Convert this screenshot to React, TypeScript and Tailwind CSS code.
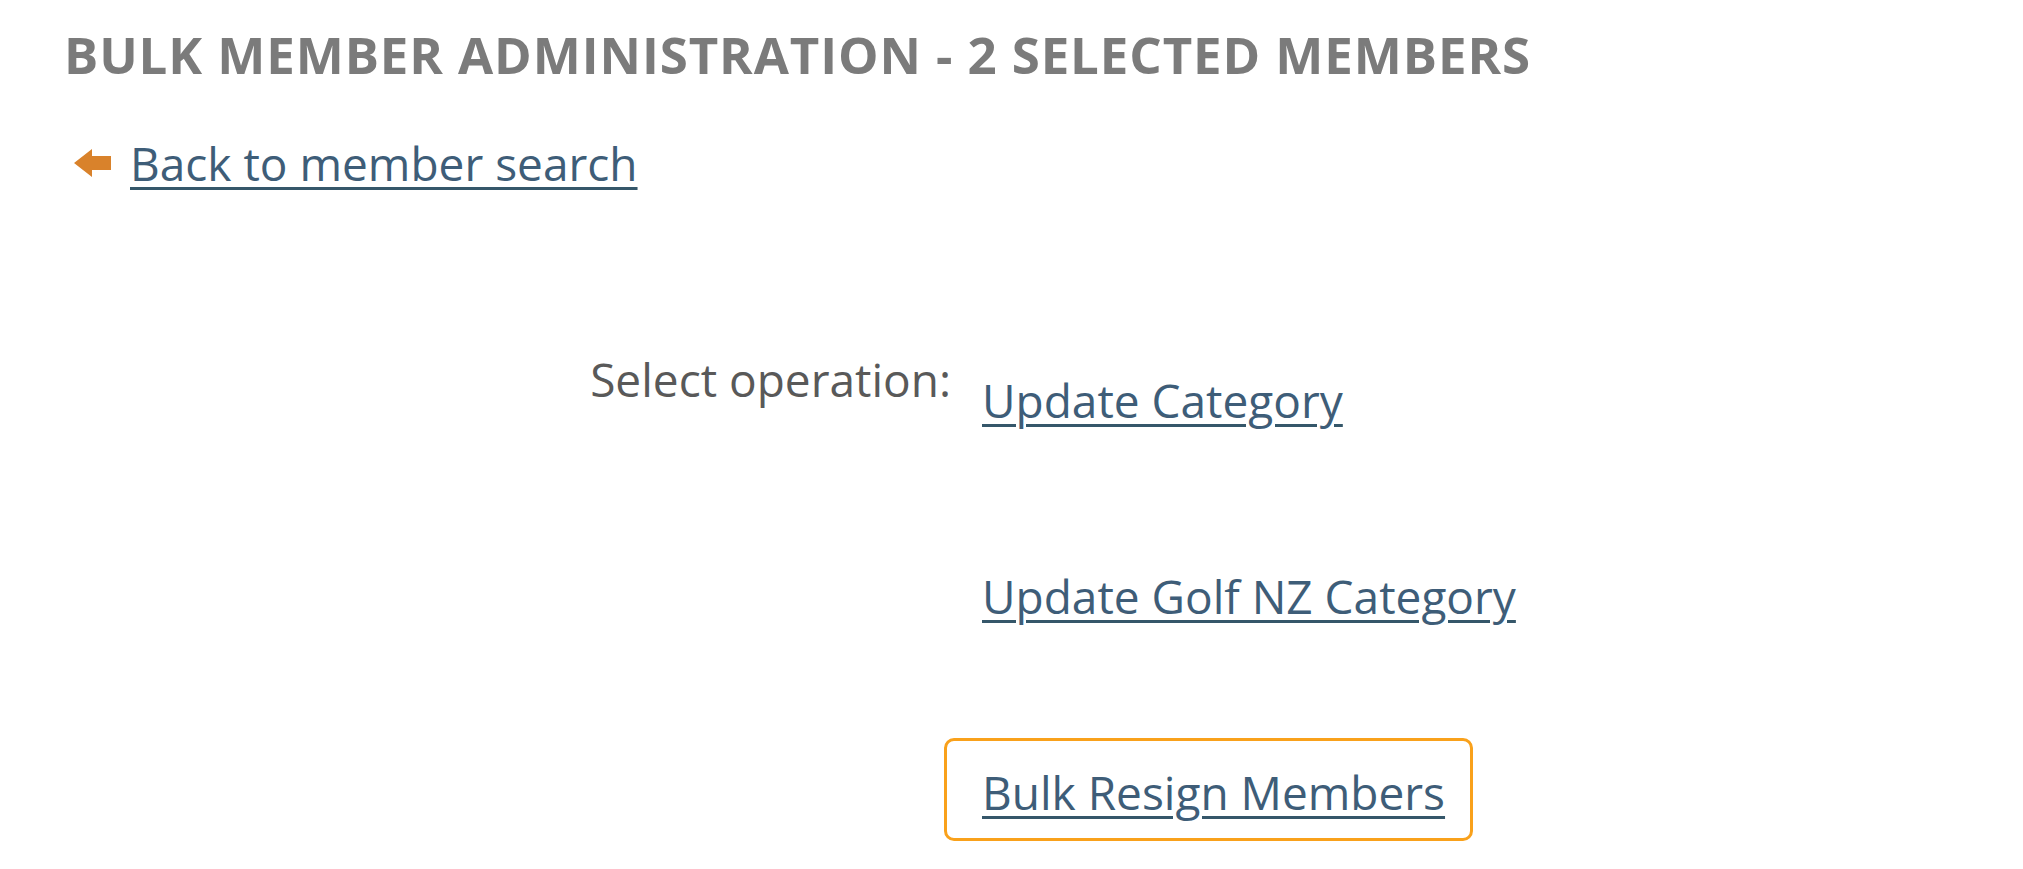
import React from "react";

const font = { fontFamily: '"Open Sans", "Noto Sans", sans-serif' };

function BackArrow() {
  return (
    <svg width="40" height="30" viewBox="0 0 40 30" className="shrink-0">
      <path d="M1 15 L19 1 L19 8 L38 8 L38 22 L19 22 L19 29 Z" fill="#d9822b" />
    </svg>
  );
}

function OpLink({ label, highlight }: { label: string; highlight?: boolean }) {
  return (
    <div
      className={
        "-ml-[38px] h-[103px] w-[529px] rounded-[10px] border-[3px] pl-[35px] pt-[22px] " +
        (highlight ? "border-[#f9a11b]" : "border-transparent")
      }
    >
      <a
        href="#"
        className="text-[46px] leading-[58px] text-[#3e5d78] underline decoration-[3px] underline-offset-[6px] decoration-[#35576a] whitespace-nowrap"
      >
        {label}
      </a>
    </div>
  );
}

export default function App() {
  return (
    <div className="min-h-[869px] w-[2023px] bg-white pl-[64px] pt-[16px]" style={font}>
      <h1 className="text-[51px] font-bold leading-[76px] text-[#7b7b7b] tracking-[0.9px] whitespace-nowrap">
        BULK MEMBER ADMINISTRATION - 2 SELECTED MEMBERS
      </h1>
      <div className="mt-[42px] flex items-center gap-[17px] pl-[9px]">
        <BackArrow />
        <a
          href="#"
          className="text-[46px] leading-[58px] text-[#3e5d78] underline decoration-[3px] underline-offset-[6px] decoration-[#35576a] whitespace-nowrap"
        >
          Back to member search
        </a>
      </div>
      <div className="mt-[154px] flex">
        <div className="w-[918px] pr-[31px] pt-[4px] text-right">
          <span className="text-[46px] leading-[58px] text-[#595959] whitespace-nowrap">Select operation:</span>
        </div>
        <div className="flex flex-col gap-[93px]">
          <OpLink label="Update Category" />
          <OpLink label="Update Golf NZ Category" />
          <OpLink label="Bulk Resign Members" highlight />
        </div>
      </div>
    </div>
  );
}
